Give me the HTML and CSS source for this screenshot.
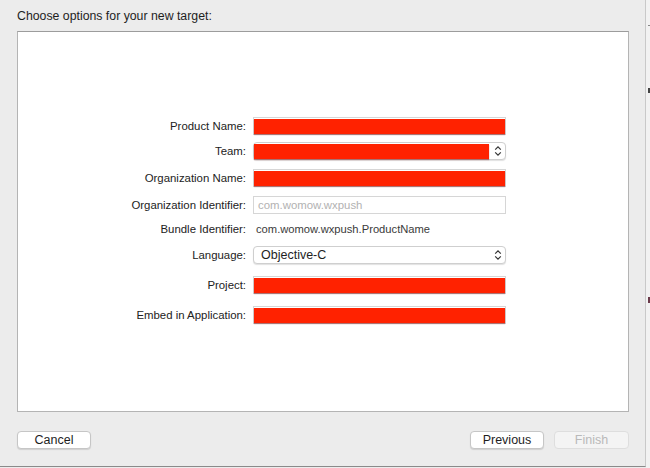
FILE: index.html
```html
<!DOCTYPE html>
<html>
<head>
<meta charset="utf-8">
<link rel="stylesheet" href="styles.css">
</head>
<body>
<div class="screen">
  <div class="window">
    <div class="title">Choose options for your new target:</div>
    <div class="panel">
      <div class="form">
        <div class="row r1">
          <div class="label">Product Name:</div>
          <div class="field text"><div class="red"></div></div>
        </div>
        <div class="row r2">
          <div class="label">Team:</div>
          <div class="field popup"><div class="red red-short"></div>
            <svg class="chev" width="8" height="12" viewBox="0 0 8 12"><path d="M1.2 4.6 L4 1.8 L6.8 4.6 M1.2 7.4 L4 10.2 L6.8 7.4" fill="none" stroke="#333" stroke-width="1.2"/></svg>
          </div>
        </div>
        <div class="row r3">
          <div class="label">Organization Name:</div>
          <div class="field text"><div class="red"></div></div>
        </div>
        <div class="row r4">
          <div class="label">Organization Identifier:</div>
          <div class="field text plain"><span class="placeholder">com.womow.wxpush</span></div>
        </div>
        <div class="row r5">
          <div class="label">Bundle Identifier:</div>
          <div class="value">com.womow.wxpush.ProductName</div>
        </div>
        <div class="row r6">
          <div class="label">Language:</div>
          <div class="field popup lang"><span class="ptext">Objective-C</span>
            <svg class="chev" width="8" height="12" viewBox="0 0 8 12"><path d="M1.2 4.6 L4 1.8 L6.8 4.6 M1.2 7.4 L4 10.2 L6.8 7.4" fill="none" stroke="#333" stroke-width="1.2"/></svg>
          </div>
        </div>
        <div class="row r7">
          <div class="label">Project:</div>
          <div class="field text"><div class="red"></div></div>
        </div>
        <div class="row r8">
          <div class="label">Embed in Application:</div>
          <div class="field text"><div class="red"></div></div>
        </div>
      </div>
    </div>
    <div class="buttons">
      <button class="btn">Cancel</button>
      <div class="spacer"></div>
      <button class="btn">Previous</button>
      <button class="btn disabled">Finish</button>
    </div>
  </div>
  <div class="edge">
    <div class="tick t1"></div>
    <div class="tick t2"></div>
    <div class="tick t3"></div>
  </div>
</div>
</body>
</html>
```
FILE: styles.css
```css
html, body {
  margin: 0;
  padding: 0;
  background: #ececec;
  font-family: "Liberation Sans", Arial, sans-serif;
  color: #222;
}
.screen {
  width: 650px;
  height: 468px;
  display: flex;
  overflow: hidden;
}
.window {
  width: 645px;
  height: 466px;
  border-right: 1px solid #c9c9c9;
  border-bottom: 1px solid #8a8a8a;
  box-sizing: content-box;
  background: #ececec;
  display: flex;
  flex-direction: column;
}
.edge {
  flex: 1;
  background: #f2f2f2;
  position: relative;
}
.tick {
  position: absolute;
  left: 2px;
  width: 2px;
  background: #444;
}
.t1 { top: 25px; height: 1px; width: 3px; background: #888; }
.t2 { top: 88px; height: 5px; }
.t3 { top: 297px; height: 6px; background: #6a3b4a; }
.title {
  height: 31px;
  box-sizing: border-box;
  padding: 9px 0 0 17px;
  font-size: 12.3px;
  color: #1e1e1e;
}
.panel {
  margin-left: 17px;
  width: 612px;
  height: 381px;
  box-sizing: border-box;
  background: #fff;
  border: 1px solid #b4b4b4;
  border-top-color: #9c9c9c;
}
.form {
  padding-top: 85px;
  display: flex;
  flex-direction: column;
}
.row {
  display: flex;
  align-items: center;
  height: 18px;
  gap: 7px;
}
.r2 { margin-top: 7px; }
.r3 { margin-top: 9px; }
.r4 { margin-top: 9px; }
.r5 { margin-top: 6px; }
.r6 { margin-top: 8px; }
.r7 { margin-top: 12px; }
.r8 { margin-top: 12px; }
.label {
  width: 228px;
  text-align: right;
  font-size: 11.4px;
  color: #222;
  white-space: nowrap;
}
.field {
  width: 253px;
  height: 18px;
  box-sizing: border-box;
  border: 1px solid #d6d6d6;
  background: #fff;
  display: flex;
  align-items: center;
}
.red {
  height: 15px;
  flex: 1;
  background: #ff2200;
  box-shadow: 0 1px 1px rgba(120, 0, 0, 0.45);
}
.red-short {
  flex: none;
  width: 235px;
}
.popup {
  border-radius: 4px;
  border-color: #cfcfcf;
  box-shadow: 0 1px 1px rgba(0, 0, 0, 0.12);
  justify-content: space-between;
  padding-right: 3px;
}
.chev {
  display: block;
}
.plain {
  padding-left: 4px;
}
.placeholder {
  font-size: 11.4px;
  color: #b2b2b2;
}
.value {
  font-size: 11.2px;
  color: #3a3a3a;
  padding-left: 3px;
}
.lang {
  padding-left: 7px;
}
.ptext {
  font-size: 12.5px;
  color: #1e1e1e;
}
.buttons {
  display: flex;
  align-items: center;
  padding: 19px 0 0 17px;
  width: 629px;
  box-sizing: border-box;
  gap: 10px;
}
.spacer { flex: 1; }
.btn {
  width: 74px;
  height: 18px;
  box-sizing: border-box;
  padding: 0;
  border: 1px solid #c6c6c6;
  border-radius: 4px;
  background: #fff;
  box-shadow: 0 1px 1px rgba(0, 0, 0, 0.12);
  font-family: "Liberation Sans", Arial, sans-serif;
  font-size: 12.5px;
  color: #1e1e1e;
  line-height: 16px;
}
.btn.disabled {
  width: 75px;
  background: #f4f4f4;
  border-color: #dedede;
  color: #b9b9b9;
  box-shadow: none;
}
```
